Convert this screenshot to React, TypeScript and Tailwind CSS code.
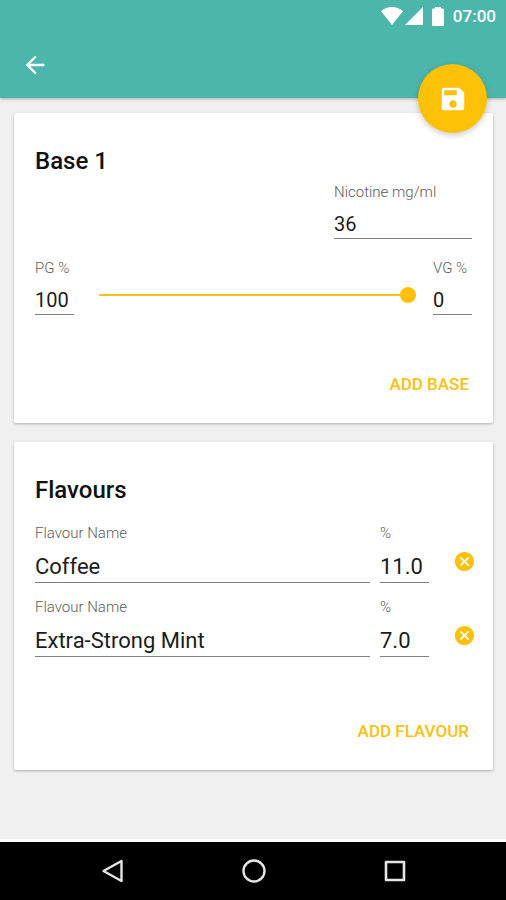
import { useState, type ReactNode } from 'react';
import { MdArrowBack, MdCancel, MdSave } from 'react-icons/md';

type FieldProps = {
  id: string;
  label: string;
  value: string;
  onChange: (value: string) => void;
  className: string;
  large?: boolean;
};

function Field({ id, label, value, onChange, className, large }: FieldProps) {
  return (
    <div className={`flex flex-col ${className}`}>
      <label htmlFor={id} className="text-[15px] leading-5 font-light whitespace-nowrap text-[#5c5c5c]">
        {label}
      </label>
      <input
        id={id}
        type="text"
        value={value}
        onChange={(e) => onChange(e.target.value)}
        className={`mt-2 w-full border-b border-[#808080] bg-transparent text-[#1c1c1c] outline-none ${
          large ? 'h-8 text-[22px]' : 'h-[29px] text-[20px]'
        }`}
      />
    </div>
  );
}

function Card({ title, action, children }: { title: string; action: string; children: ReactNode }) {
  return (
    <section className="flex flex-col rounded-xs bg-white px-[21px] pt-[34px] pb-5 shadow-[0_1px_3px_rgba(0,0,0,0.28)]">
      <h2 className="text-[24px] leading-7 font-medium text-[#111111]">{title}</h2>
      {children}
      <button type="button" className="h-9 self-end px-[3px] text-[17px] font-medium text-[#fcc010]">
        {action}
      </button>
    </section>
  );
}

function StatusBar() {
  return (
    <div className="flex h-8 items-center justify-end pr-[10px] text-white">
      <svg className="mr-0.5 h-[18px] w-[22px]" viewBox="0 0 22 18" fill="currentColor" aria-hidden="true">
        <path d="M11 18 0 4.2C3 1.6 6.8 0 11 0s8 1.6 11 4.2z" />
      </svg>
      <svg className="mr-[9px] size-[18px]" viewBox="0 0 18 18" fill="currentColor" aria-hidden="true">
        <path d="M0 18 18 0v18z" />
      </svg>
      <svg className="mr-[9px] h-[19px] w-3" viewBox="0 0 12 19" fill="currentColor" aria-hidden="true">
        <path d="M3 0h6v1.500h1.700c.7 0 1.300.6 1.300 1.300v14.900c0 .7-.6 1.300-1.300 1.300H1.300C.6 19 0 18.400 0 17.700V2.800C0 2.100.6 1.500 1.300 1.500H3z" />
      </svg>
      <span className="text-[17px] leading-5 font-medium">07:00</span>
    </div>
  );
}

function NavigationBar() {
  return (
    <nav className="mt-auto grid h-[61px] grid-cols-3 border-t-3 border-[#f9f9f9] bg-black pr-10 pl-[42px] text-[#e6e6e6]">
      <button type="button" aria-label="Back" className="flex items-center justify-center">
        <svg className="size-6" viewBox="0 0 24 24" fill="none" stroke="currentColor" strokeWidth="2.4" strokeLinejoin="round">
          <path d="M20.500 2v20L2.500 12z" />
        </svg>
      </button>
      <button type="button" aria-label="Home" className="flex items-center justify-center">
        <svg className="size-6" viewBox="0 0 24 24" fill="none" stroke="currentColor" strokeWidth="2.4">
          <circle cx="12" cy="12" r="10.500" />
        </svg>
      </button>
      <button type="button" aria-label="Recent apps" className="flex items-center justify-center">
        <svg className="size-6" viewBox="0 0 24 24" fill="none" stroke="currentColor" strokeWidth="2.6" strokeLinejoin="round">
          <path d="M3 3h18v18H3z" />
        </svg>
      </button>
    </nav>
  );
}

export default function App() {
  const [nicotine, setNicotine] = useState('36');
  const [pg, setPg] = useState(100);
  const [flavours, setFlavours] = useState([
    { name: 'Coffee', percent: '11.0' },
    { name: 'Extra-Strong Mint', percent: '7.0' },
  ]);

  const clamp = (n: number) => Math.max(0, Math.min(100, Number.isNaN(n) ? 0 : n));
  const update = (index: number, change: { name?: string; percent?: string }) =>
    setFlavours(flavours.map((f, i) => (i === index ? { ...f, ...change } : f)));

  return (
    <div className="flex min-h-screen flex-col bg-[#f0f0f0] font-[Roboto,sans-serif]">
      <header className="relative bg-[#4db6ac] shadow-[0_1px_3px_rgba(0,0,0,0.3)]">
        <StatusBar />
        <div className="flex h-[66px] items-center px-[21px]">
          <button type="button" aria-label="Back" className="text-white">
            <MdArrowBack size={28} />
          </button>
        </div>
        <button
          type="button"
          aria-label="Save"
          className="absolute right-[19px] -bottom-[35px] flex size-[69px] items-center justify-center rounded-full bg-[#ffc107] text-white shadow-[0_2px_6px_rgba(0,0,0,0.22)]"
        >
          <MdSave size={30} />
        </button>
      </header>

      <main className="flex flex-col gap-[19px] px-[14px] pt-[15px] pb-5 pr-[13px]">
        <Card title="Base 1" action="ADD BASE">
          <Field
            id="nicotine"
            label="Nicotine mg/ml"
            value={nicotine}
            onChange={setNicotine}
            className="mt-[7px] w-[138px] self-end"
          />
          <div className="mt-[19px] mb-[52px] flex items-end">
            <Field id="pg" label="PG %" value={String(pg)} onChange={(v) => setPg(clamp(Number(v)))} className="w-[39px]" />
            <input
              type="range"
              aria-label="PG to VG ratio"
              min={0}
              max={100}
              value={pg}
              onChange={(e) => setPg(Number(e.target.value))}
              className="mr-[17px] mb-3 ml-[25px] h-4 min-w-0 flex-1 appearance-none bg-transparent [&::-webkit-slider-runnable-track]:h-0.5 [&::-webkit-slider-runnable-track]:rounded-full [&::-webkit-slider-runnable-track]:bg-[#fbc01e] [&::-webkit-slider-thumb]:-mt-[7px] [&::-webkit-slider-thumb]:size-4 [&::-webkit-slider-thumb]:appearance-none [&::-webkit-slider-thumb]:rounded-full [&::-webkit-slider-thumb]:bg-[#ffc107]"
            />
            <Field
              id="vg"
              label="VG %"
              value={String(100 - pg)}
              onChange={(v) => setPg(100 - clamp(Number(v)))}
              className="w-[39px]"
            />
          </div>
        </Card>

        <Card title="Flavours" action="ADD FLAVOUR">
          <ul className="mt-[19px] mb-[57px] flex flex-col gap-[14px]">
            {flavours.map((flavour, i) => (
              <li key={i} className="-mr-1 flex items-end">
                <Field
                  id={`flavour-name-${i}`}
                  label="Flavour Name"
                  value={flavour.name}
                  onChange={(name) => update(i, { name })}
                  className="mr-[10px] min-w-0 flex-1"
                  large
                />
                <Field
                  id={`flavour-percent-${i}`}
                  label="%"
                  value={flavour.percent}
                  onChange={(percent) => update(i, { percent })}
                  className="w-[49px]"
                  large
                />
                <button
                  type="button"
                  aria-label={`Remove ${flavour.name}`}
                  onClick={() => setFlavours(flavours.filter((_, n) => n !== i))}
                  className="mb-[10px] ml-[23px] flex size-6 items-center justify-center text-[#ffc107]"
                >
                  <MdCancel size={23} />
                </button>
              </li>
            ))}
          </ul>
        </Card>
      </main>

      <NavigationBar />
    </div>
  );
}
